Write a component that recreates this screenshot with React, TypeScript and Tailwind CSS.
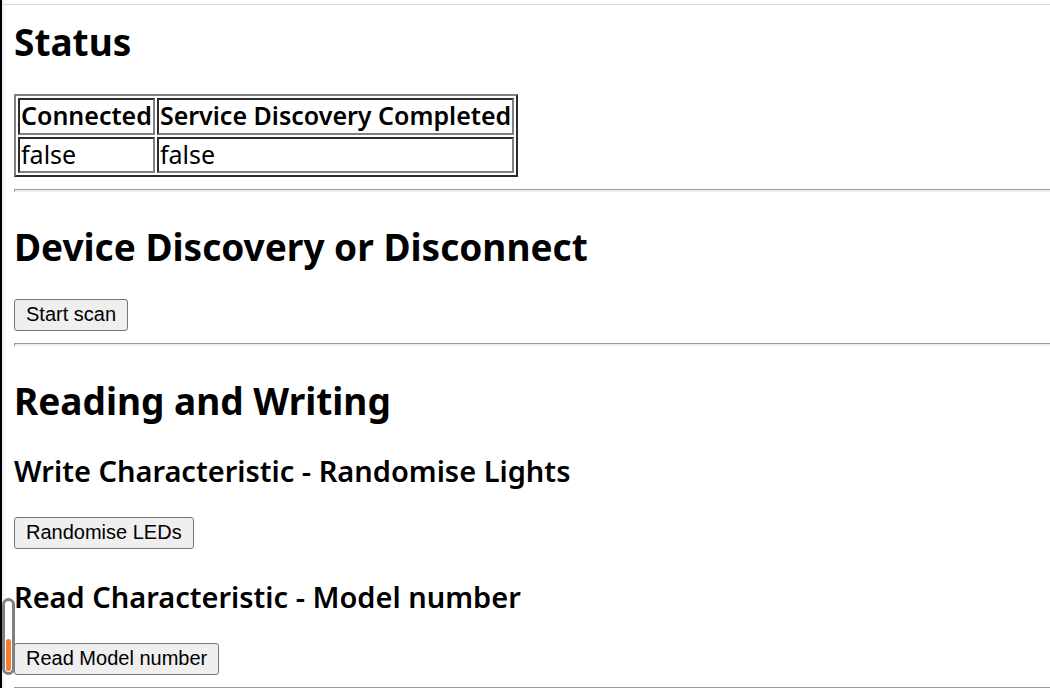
import type { ReactNode } from "react";

function SectionTitle({ children }: { children: ReactNode }) {
  return <h2 className="text-[37px] leading-[47px] font-bold">{children}</h2>;
}

function SubTitle({ children }: { children: ReactNode }) {
  return <h3 className="text-[29px] leading-9 font-semibold">{children}</h3>;
}

function ActionButton({ children }: { children: ReactNode }) {
  return (
    <button
      type="button"
      className="block h-8 rounded-[3px] border border-[#767676] bg-[#efefef] px-[11px] pb-[2px] font-['Liberation_Sans',Arial,sans-serif] text-[20px] leading-[28px] hover:bg-[#e5e5e5]"
    >
      {children}
    </button>
  );
}

function Divider() {
  return (
    <hr className="mt-3 h-[3px] border-0 border-t border-l border-t-[#9a9a9a] border-l-[#9a9a9a] bg-[#eeeeee]" />
  );
}

const headCell =
  "h-[37px] border-2 border-t-[#2c2c2c] border-l-[#2c2c2c] border-r-[#808080] border-b-[#808080] px-px pb-[3px] text-left font-semibold whitespace-nowrap";
const bodyCell =
  "h-9 border-2 border-t-[#2c2c2c] border-l-[#2c2c2c] border-r-[#808080] border-b-[#808080] px-px pb-[2px]";

export default function App() {
  return (
    <div className="relative min-h-screen overflow-hidden border-l-2 border-black bg-white font-['Noto_Sans','Open_Sans',sans-serif] text-black">
      <div className="absolute inset-y-0 left-0 w-1 bg-linear-to-r from-[#f0f0f0] to-white" />
      <div className="relative mt-1 border-t border-[#dcdcdf]" />
      <main className="relative pt-[13px] pl-3">
        <section>
          <SectionTitle>Status</SectionTitle>
          <table className="mt-[29px] w-[504px] border-separate border-spacing-[2px] border-2 border-t-[#808080] border-l-[#808080] border-r-[#2c2c2c] border-b-[#2c2c2c] text-[25px] leading-[30px]">
            <thead>
              <tr>
                <th scope="col" className={headCell}>Connected</th>
                <th scope="col" className={headCell}>Service Discovery Completed</th>
              </tr>
            </thead>
            <tbody>
              <tr>
                <td className={bodyCell}>false</td>
                <td className={bodyCell}>false</td>
              </tr>
            </tbody>
          </table>
          <Divider />
        </section>

        <section className="pt-[31px]">
          <SectionTitle>Device Discovery or Disconnect</SectionTitle>
          <div className="mt-[29px]">
            <ActionButton>Start scan</ActionButton>
          </div>
          <Divider />
        </section>

        <section className="pt-[31px]">
          <SectionTitle>Reading and Writing</SectionTitle>
          <div className="mt-[29px]">
            <SubTitle>Write Characteristic - Randomise Lights</SubTitle>
            <div className="mt-7">
              <ActionButton>Randomise LEDs</ActionButton>
            </div>
          </div>
          <div className="mt-[30px]">
            <SubTitle>Read Characteristic - Model number</SubTitle>
            <div className="mt-7">
              <ActionButton>Read Model number</ActionButton>
            </div>
          </div>
          <Divider />
        </section>
      </main>
      <div className="absolute bottom-[15px] left-0 flex h-[77px] w-[13px] items-end rounded-full border-[3px] border-[#808080] bg-white p-px">
        <div className="h-8 w-full rounded-full bg-[#f97b2c]" />
      </div>
    </div>
  );
}
